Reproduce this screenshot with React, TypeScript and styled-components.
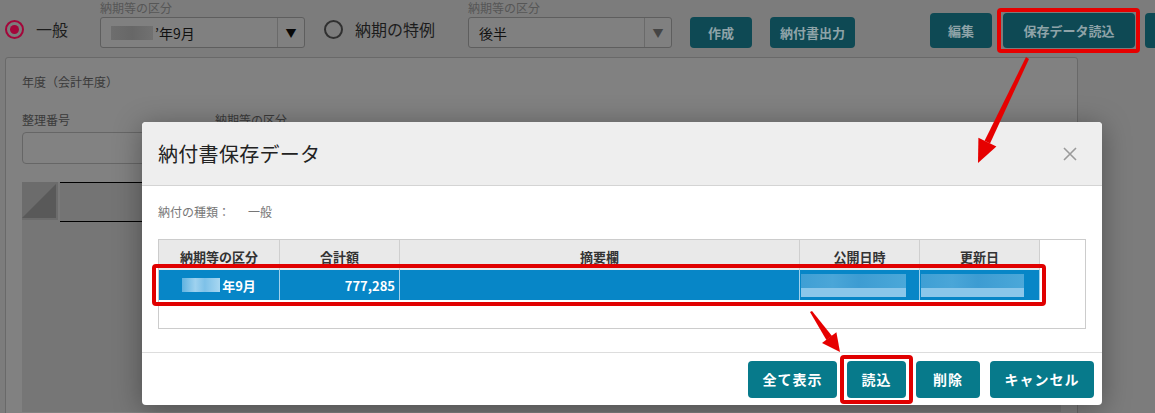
import React from "react";
import styled, { createGlobalStyle } from "styled-components";

const GlobalStyle = createGlobalStyle`
  html, body {
    margin: 0;
    padding: 0;
    background: #7c7c7c;
    font-family: "Noto Sans CJK JP", "Noto Sans", sans-serif;
  }
`;

/* the page behind the dialog is drawn already dimmed, as in the capture */
const Screen = styled.div`
  position: relative;
  width: 1155px;
  height: 413px;
  overflow: hidden;
  background: #7c7c7c;
`;

const TopBar = styled.div`
  display: flex;
  align-items: flex-start;
  height: 52px;
  padding: 1px 0 0 5px;
  box-sizing: border-box;
  white-space: nowrap;
`;

const RadioOption = styled.label<{ $ml?: number }>`
  display: flex;
  flex-shrink: 0;
  align-items: center;
  gap: 12px;
  margin-left: ${(p) => p.$ml || 0}px;
  margin-top: 16px;
  font-size: 16px;
  color: #1c1c1c;
`;

const RadioCircle = styled.span<{ $checked?: boolean }>`
  box-sizing: border-box;
  width: 19px;
  height: 19px;
  border-radius: 50%;
  border: 2px solid ${(p) => (p.$checked ? "#a3063a" : "#303030")};
  display: flex;
  align-items: center;
  justify-content: center;
  &::before {
    content: "";
    width: 9px;
    height: 9px;
    border-radius: 50%;
    background: ${(p) => (p.$checked ? "#a3063a" : "transparent")};
  }
`;

const Field = styled.div<{ $ml?: number; $w: number }>`
  display: flex;
  flex-direction: column;
  flex-shrink: 0;
  width: ${(p) => p.$w}px;
  margin-left: ${(p) => p.$ml || 0}px;
`;

const FieldLabel = styled.span`
  font-size: 12px;
  line-height: 14px;
  color: #565656;
  margin-bottom: 2px;
`;

const SelectBox = styled.div`
  box-sizing: border-box;
  display: flex;
  align-items: stretch;
  height: 31px;
  border: 1px solid #5e5e5e;
  border-radius: 3px;
  background: #808080;
  font-size: 14px;
  color: #111;
`;

const SelectValue = styled.span`
  flex: 1;
  display: flex;
  align-items: center;
  padding-left: 10px;
`;

const SelectArrow = styled.span<{ $disabled?: boolean }>`
  width: 26px;
  border-left: 1px solid #6a6a6a;
  display: flex;
  align-items: center;
  justify-content: center;
  font-size: 11px;
  color: ${(p) => (p.$disabled ? "#454545" : "#080808")};
`;

const Masked = styled.span<{ $w: number; $tone?: "gray" | "blue" }>`
  display: inline-block;
  width: ${(p) => p.$w}px;
  height: 14px;
  margin-right: 2px;
  background: ${(p) =>
    p.$tone === "blue"
      ? "linear-gradient(90deg, #5fb2e0 0%, #9fd2ef 35%, #7ec1e8 60%, #a8d7f1 100%)"
      : "linear-gradient(90deg, #6e6e6e 0%, #676767 50%, #717171 100%)"};
`;

const PageButton = styled.button<{ $ml?: number; $mt?: number; $h?: number; $w: number }>`
  position: relative;
  box-sizing: border-box;
  width: ${(p) => p.$w}px;
  height: ${(p) => p.$h || 31}px;
  margin-left: ${(p) => p.$ml || 0}px;
  margin-top: ${(p) => p.$mt ?? 16}px;
  flex-shrink: 0;
  border: none;
  border-radius: 4px;
  background: #0e4954;
  color: #8ea3a8;
  font-family: inherit;
  font-size: 13px;
  font-weight: 700;
  padding: 0;
`;

const MarkedPageButton = styled(PageButton)`
  &::after {
    content: "";
    position: absolute;
    top: -5px;
    bottom: -5px;
    left: -6px;
    right: -5px;
    border: 4px solid #e60000;
    border-radius: 4px;
  }
`;

const Panel = styled.div`
  box-sizing: border-box;
  width: 1073px;
  height: 420px;
  margin: 5px 0 0 5px;
  padding: 17px 16px;
  background: #818181;
  border: 1px solid #696969;
  border-radius: 3px;
`;

const PanelText = styled.div`
  font-size: 12px;
  line-height: 14px;
  color: #3a3a3a;
`;

const FormRow = styled.div`
  display: flex;
  gap: 15px;
  margin-top: 24px;
`;

const FormField = styled.div<{ $w: number }>`
  display: flex;
  flex-direction: column;
  gap: 5px;
  width: ${(p) => p.$w}px;
`;

const TextInput = styled.div`
  height: 30px;
  border: 1px solid #666;
  border-radius: 4px;
  background: #828282;
`;

const Grid = styled.div`
  display: flex;
  flex-direction: column;
  margin-top: 18px;
  height: 230px;
  background: #767676;
`;

const GridHead = styled.div`
  display: flex;
  height: 40px;
`;

const CornerCell = styled.div`
  width: 36px;
  height: 38px;
  background: #6c6c6c;
  border-right: 2px solid #7a7a7a;
  position: relative;
  overflow: hidden;
  &::before {
    content: "";
    position: absolute;
    right: 2px;
    bottom: 2px;
    border-style: solid;
    border-width: 0 0 34px 34px;
    border-color: transparent transparent #595959 transparent;
  }
`;

const HeadCell = styled.div`
  flex: 1;
  border-top: 1px solid #000;
  border-bottom: 1px solid #000;
  background: #747474;
`;

/* ---------- dialog ---------- */

const Modal = styled.div`
  position: absolute;
  left: 142px;
  top: 122px;
  width: 960px;
  height: 283px;
  display: flex;
  flex-direction: column;
  background: #fff;
  border-radius: 4px;
  box-shadow: 0 4px 28px rgba(0, 0, 0, 0.35);
`;

const ModalHeader = styled.div`
  height: 64px;
  box-sizing: border-box;
  display: flex;
  align-items: center;
  justify-content: space-between;
  padding: 0 24px 0 16px;
  background: #eeeeee;
  border-bottom: 1px solid #d4d4d4;
  border-radius: 4px 4px 0 0;
`;

const ModalTitle = styled.h2`
  margin: 0;
  font-size: 20px;
  font-weight: 400;
  color: #222;
  letter-spacing: 0.3px;
`;

const CloseButton = styled.span`
  display: flex;
  width: 16px;
  height: 16px;
`;

const ModalBody = styled.div`
  flex: 1;
  padding: 19px 16px 0;
`;

const KindLine = styled.div`
  display: flex;
  gap: 18px;
  font-size: 12px;
  line-height: 14px;
  color: #777;
`;

const TableBox = styled.div`
  box-sizing: border-box;
  height: 90px;
  margin-top: 20px;
  border: 1px solid #cccccc;
`;

const TableRow = styled.div<{ $head?: boolean }>`
  position: relative;
  display: grid;
  grid-template-columns: 121px 120px 400px 120px 120px;
  width: 881px;
  height: 30px;
  background: ${(p) => (p.$head ? "#e9e9e9" : "#0786c7")};
`;

const MarkedRow = styled(TableRow)`
  &::after {
    content: "";
    position: absolute;
    top: -6px;
    bottom: -6px;
    left: -7px;
    right: -6px;
    border: 4px solid #e00000;
    border-radius: 4px;
  }
`;

const Cell = styled.div<{ $head?: boolean; $align?: string }>`
  display: flex;
  align-items: ${(p) => (p.$head ? "flex-end" : "center")};
  justify-content: ${(p) => p.$align || "center"};
  padding: ${(p) => (p.$head ? "0 4px 4px" : "0 4px")};
  border-right: 1px solid ${(p) => (p.$head ? "#cfcfcf" : "#9fd0ec")};
  font-size: 13px;
  font-weight: 700;
  color: ${(p) => (p.$head ? "#333" : "#fff")};
  white-space: nowrap;
  overflow: hidden;
`;

const MaskedBand = styled.span<{ $w: number }>`
  display: block;
  width: ${(p) => p.$w}px;
  height: 23px;
  margin-left: -3px;
  background:
    linear-gradient(180deg, transparent 0 60%, #8bc7ea 60% 100%),
    linear-gradient(90deg, #3f9fd4 0%, #4aa6d8 30%, #3d9cd2 55%, #4ba8d9 100%);
`;

const ModalFooter = styled.div`
  display: flex;
  justify-content: flex-end;
  align-items: center;
  gap: 10px;
  height: 53px;
  box-sizing: border-box;
  padding: 0 8px;
  border-top: 1px solid #dddddd;
`;

const DialogButton = styled.button<{ $w: number }>`
  position: relative;
  width: ${(p) => p.$w}px;
  height: 37px;
  border: none;
  border-radius: 4px;
  background: #077a8b;
  color: #fff;
  font-family: inherit;
  font-size: 14px;
  font-weight: 700;
  letter-spacing: 1px;
  padding: 0;
`;

const MarkedDialogButton = styled(DialogButton)`
  &::after {
    content: "";
    position: absolute;
    top: -6px;
    bottom: -6px;
    left: -7px;
    right: -7px;
    border: 4px solid #e00000;
    border-radius: 4px;
  }
`;

const Annotations = styled.svg`
  position: absolute;
  left: 0;
  top: 0;
  pointer-events: none;
`;

export default function App() {
  return (
    <Screen>
      <GlobalStyle />
      <TopBar>
        <RadioOption>
          <RadioCircle $checked />
          一般
        </RadioOption>
        <Field $ml={32} $w={205}>
          <FieldLabel>納期等の区分</FieldLabel>
          <SelectBox>
            <SelectValue>
              <Masked $w={42} />
              ’年9月
            </SelectValue>
            <SelectArrow>▼</SelectArrow>
          </SelectBox>
        </Field>
        <RadioOption $ml={19}>
          <RadioCircle />
          納期の特例
        </RadioOption>
        <Field $ml={33} $w={204}>
          <FieldLabel>納期等の区分</FieldLabel>
          <SelectBox>
            <SelectValue>後半</SelectValue>
            <SelectArrow $disabled>▼</SelectArrow>
          </SelectBox>
        </Field>
        <PageButton $ml={18} $w={62}>作成</PageButton>
        <PageButton $ml={18} $w={85}>納付書出力</PageButton>
        <PageButton $ml={75} $mt={12} $h={35} $w={62}>編集</PageButton>
        <MarkedPageButton $ml={11} $mt={12} $h={35} $w={132}>
          保存データ読込
        </MarkedPageButton>
        <PageButton $ml={10} $mt={12} $h={35} $w={62}>戻る</PageButton>
      </TopBar>

      <Panel>
        <PanelText>年度（会計年度）</PanelText>
        <FormRow>
          <FormField $w={178}>
            <PanelText>整理番号</PanelText>
            <TextInput />
          </FormField>
          <FormField $w={200}>
            <PanelText>納期等の区分</PanelText>
            <TextInput />
          </FormField>
        </FormRow>
        <Grid>
          <GridHead>
            <CornerCell />
            <HeadCell />
          </GridHead>
        </Grid>
      </Panel>

      <Modal>
        <ModalHeader>
          <ModalTitle>納付書保存データ</ModalTitle>
          <CloseButton>
            <svg width="16" height="16" viewBox="0 0 16 16">
              <path d="M2 2 L14 14 M14 2 L2 14" stroke="#9a9a9a" strokeWidth="1.6" />
            </svg>
          </CloseButton>
        </ModalHeader>
        <ModalBody>
          <KindLine>
            <span>納付の種類：</span>
            <span>一般</span>
          </KindLine>
          <TableBox>
            <TableRow $head>
              <Cell $head>納期等の区分</Cell>
              <Cell $head>合計額</Cell>
              <Cell $head>摘要欄</Cell>
              <Cell $head>公開日時</Cell>
              <Cell $head>更新日</Cell>
            </TableRow>
            <MarkedRow>
              <Cell>
                <Masked $w={38} $tone="blue" />
                年9月
              </Cell>
              <Cell $align="flex-end">777,285</Cell>
              <Cell />
              <Cell $align="flex-start">
                <MaskedBand $w={105} />
              </Cell>
              <Cell $align="flex-start">
                <MaskedBand $w={103} />
              </Cell>
            </MarkedRow>
          </TableBox>
        </ModalBody>
        <ModalFooter>
          <DialogButton $w={89}>全て表示</DialogButton>
          <MarkedDialogButton $w={59}>読込</MarkedDialogButton>
          <DialogButton $w={64}>削除</DialogButton>
          <DialogButton $w={104}>キャンセル</DialogButton>
        </ModalFooter>
      </Modal>

      <Annotations width="1155" height="413" viewBox="0 0 1155 413">
        <polygon points="1026,57 1029,59 990,143.4 984.6,140.8" fill="#e60000" />
        <polygon points="978,163 996.4,146.4 978.4,137.8" fill="#e60000" />
        <polygon points="810,312 812,311 832,336 826.4,340" fill="#e60000" />
        <polygon points="840,352 836.4,332.2 822,343" fill="#e60000" />
      </Annotations>
    </Screen>
  );
}
